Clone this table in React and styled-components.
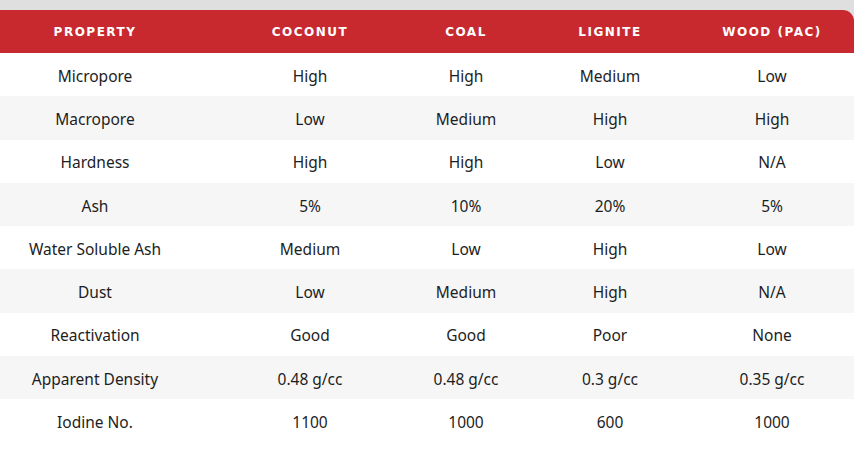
import React from 'react';
import styled, { createGlobalStyle } from 'styled-components';

const GlobalStyle = createGlobalStyle`
  html, body {
    margin: 0;
    padding: 0;
    background: #dfdfdf;
  }
`;

const Page = styled.div`
  padding-top: 10px;
  width: 854px;
  height: 448px;
  background: #dfdfdf;
`;

const Table = styled.div`
  background: #ffffff;
  border-top-right-radius: 11px;
  overflow: hidden;
  height: 448px;
`;

const Row = styled.div`
  display: grid;
  grid-template-columns: 190px 240px 72px 216px 108px;
  align-items: center;
  justify-items: center;
  height: ${p => (p.head ? '43px' : '43.3px')};
  background: ${p => (p.head ? '#c8292f' : p.shade ? '#f6f6f6' : '#ffffff')};
`;

const HeadCell = styled.div`
  font-family: "DejaVu Sans", sans-serif;
  font-weight: bold;
  font-size: 12px;
  letter-spacing: 1.5px;
  color: #ffffff;
  text-transform: uppercase;
  white-space: nowrap;
  padding-top: 1px;
`;

const Cell = styled.div`
  font-family: "Noto Sans", sans-serif;
  font-size: 15.5px;
  color: #1d1d24;
  white-space: nowrap;
  padding-top: 2px;
`;

const columns = ['Property', 'Coconut', 'Coal', 'Lignite', 'Wood (PAC)'];

const rows = [
  ['Micropore', 'High', 'High', 'Medium', 'Low'],
  ['Macropore', 'Low', 'Medium', 'High', 'High'],
  ['Hardness', 'High', 'High', 'Low', 'N/A'],
  ['Ash', '5%', '10%', '20%', '5%'],
  ['Water Soluble Ash', 'Medium', 'Low', 'High', 'Low'],
  ['Dust', 'Low', 'Medium', 'High', 'N/A'],
  ['Reactivation', 'Good', 'Good', 'Poor', 'None'],
  ['Apparent Density', '0.48 g/cc', '0.48 g/cc', '0.3 g/cc', '0.35 g/cc'],
  ['Iodine No.', '1100', '1000', '600', '1000'],
];

function App() {
  return (
    <Page>
      <GlobalStyle />
      <Table>
        <Row head>
          {columns.map(c => <HeadCell key={c}>{c}</HeadCell>)}
        </Row>
        {rows.map((r, i) => (
          <Row key={r[0]} shade={i % 2 === 1}>
            {r.map((v, j) => <Cell key={j}>{v}</Cell>)}
          </Row>
        ))}
      </Table>
    </Page>
  );
}

export default App;
